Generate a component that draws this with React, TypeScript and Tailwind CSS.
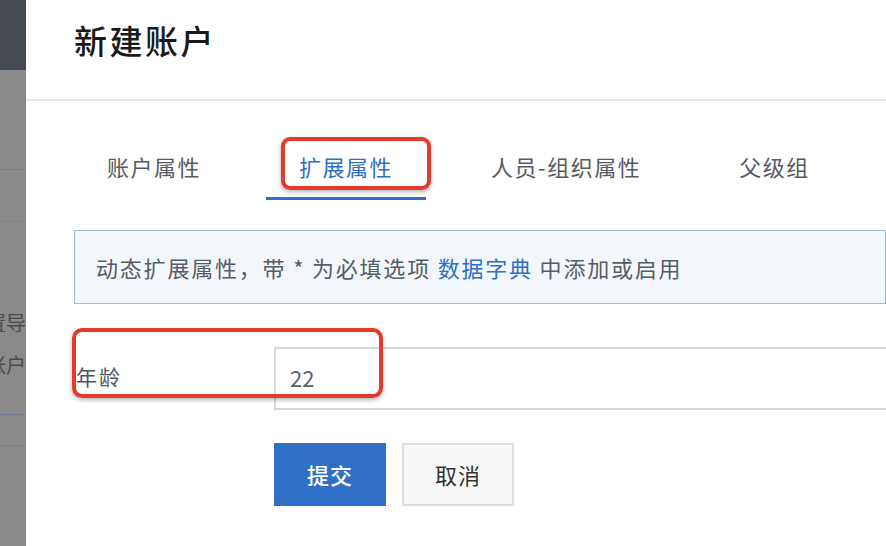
import React from "react";

const font = { fontFamily: '"Noto Sans CJK SC", "Noto Sans", sans-serif' };

function App() {
  const tabs = ["账户属性", "扩展属性", "人员-组织属性", "父级组"];
  const active = 1;

  return (
    <div style={font} className="flex w-[886px] h-[546px] overflow-hidden bg-white">
      {/* background page peeking on the left */}
      <div className="w-[26px] shrink-0 flex flex-col bg-[#8a8a8a] overflow-hidden">
        <div className="h-[70px] bg-[#464a52]" />
        <div className="h-[100px] border-b border-[#7c7c7c]" />
        <div className="h-[52px] border-b border-[#76839a]" />
        <div className="flex flex-col items-end pt-[80px] text-[20px] leading-[42px] text-[#4a4a4a] whitespace-nowrap">
          <span>配置导</span>
          <span>账户</span>
        </div>
        <div className="h-[29px] border-b border-[#6f7b8c]" />
        <div className="h-[31px] border-b border-[#7d7d7d]" />
      </div>

      {/* modal */}
      <div className="relative flex-1 flex flex-col">
        <div className="h-[101px] shrink-0 border-b-2 border-[#e4e6ea] flex items-center pl-[48px] pb-[17px]">
          <h1 className="text-[33px] font-medium text-[#1a1a1a] tracking-[2.5px]">新建账户</h1>
        </div>

        <div className="pl-[48px] pt-[38px]">
          <div className="flex gap-8">
            {tabs.map((t, i) => (
              <div
                key={t}
                className={
                  i === active
                    ? "h-[61px] px-[33px] pb-[4px] flex items-center text-[22px] tracking-[1.5px] text-[#2f6fc4] border-b-[3px] border-[#2f6fc4]"
                    : "h-[61px] px-[33px] pb-[4px] flex items-center text-[22px] tracking-[1.5px] text-[#555a63] border-b-[3px] border-transparent"
                }
              >
                {t}
              </div>
            ))}
          </div>

          <div className="mt-[30px] h-[74px] border border-[#a3bcd8] bg-[#f3f7fc] flex items-center pl-[21px] text-[22px] tracking-[1.8px] text-[#555c66] whitespace-nowrap">
            动态扩展属性，带 * 为必填选项&nbsp;<span className="text-[#2f6fc4]">数据字典</span>&nbsp;中添加或启用
          </div>

          <div className="mt-[43px] flex items-center">
            <div className="w-[200px] pl-[2px] pb-[3px] text-[21px] tracking-[2px] text-[#4f5660]">年龄</div>
            <div className="flex-1 h-[63px] border-2 border-r-0 border-[#d6d9de] flex items-center pl-[14px] pb-[2px] text-[22px] text-[#5a6270]">
              22
            </div>
          </div>

          <div className="mt-[33px] ml-[200px] flex gap-4">
            <button className="w-[112px] h-[63px] bg-[#2f6fc6] text-white text-[22px] tracking-[1px] font-medium">提交</button>
            <button className="w-[112px] h-[63px] bg-[#f8f8f8] border-2 border-[#dedede] text-[#333] text-[22px] tracking-[1px]">取消</button>
          </div>
        </div>

        {/* red annotation boxes */}
        <div className="absolute left-[255px] top-[137px] w-[150px] h-[53px] rounded-[9px] border-4 border-[#e23a2c] shadow-[0_2px_4px_rgba(0,0,0,0.3)]" />
        <div className="absolute left-[46px] top-[328px] w-[311px] h-[70px] rounded-[10px] border-4 border-[#e23a2c] shadow-[0_2px_4px_rgba(0,0,0,0.3)]" />
      </div>
    </div>
  );
}

export default App;
